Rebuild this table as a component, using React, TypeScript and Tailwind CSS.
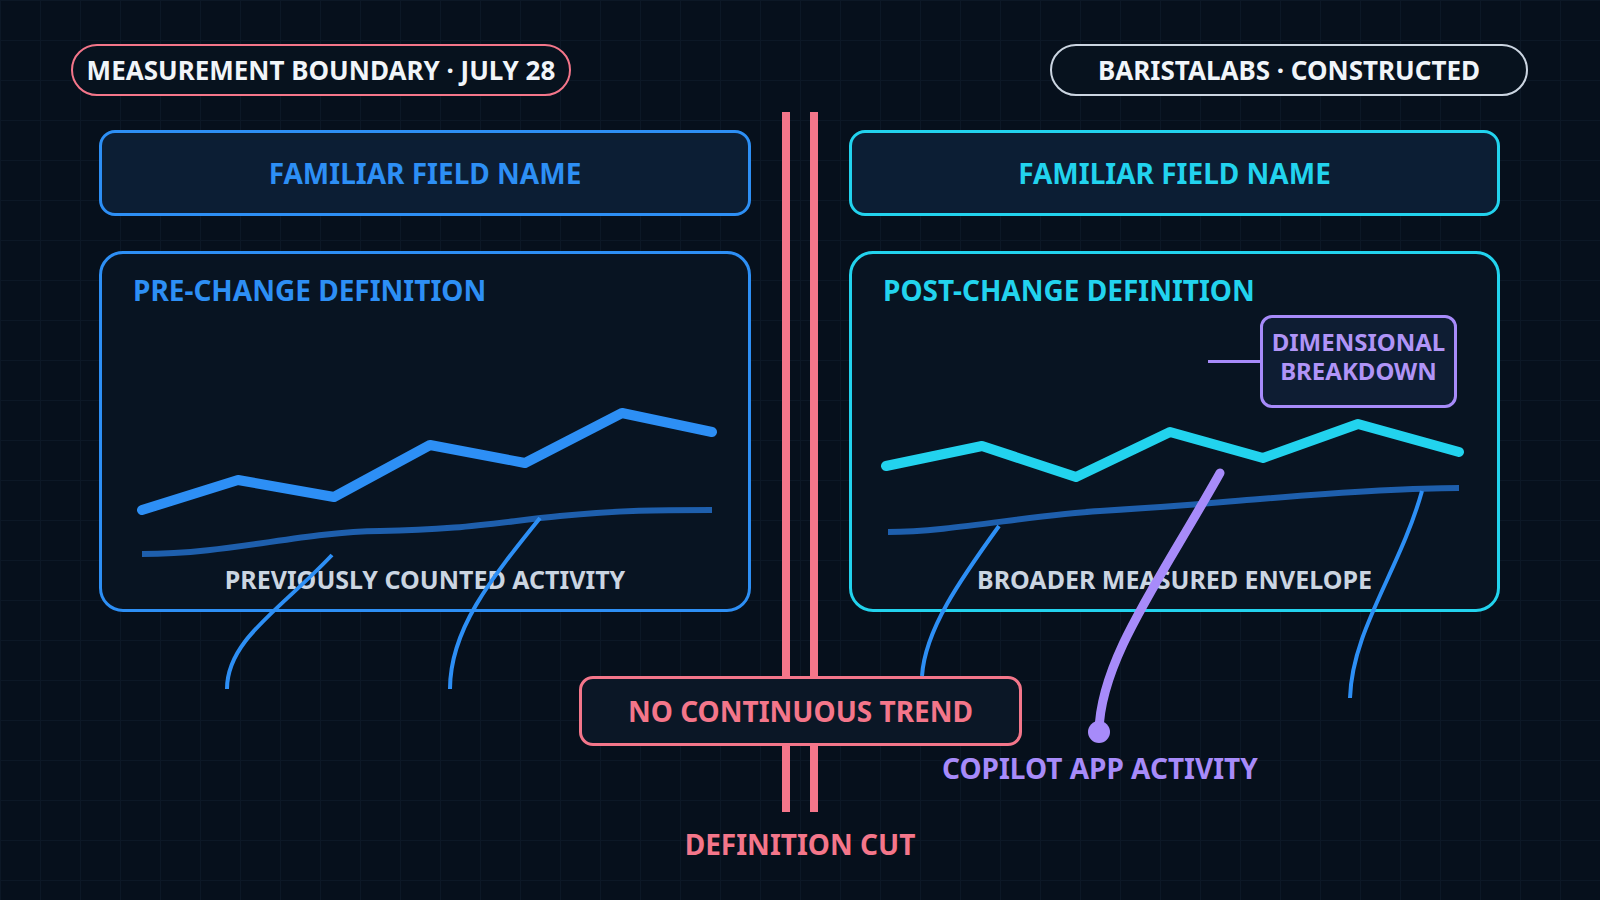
const BLUE = "#2d8ff5";
const CYAN = "#22d3ee";
const DEEP = "#1e5fad";
const VIOLET = "#a78bfa";
const ROSE = "#f4768a";

function Panel({
  side,
  title,
  label,
  children,
}: {
  side: "pre" | "post";
  title: string;
  label: string;
  children?: React.ReactNode;
}) {
  const isPre = side === "pre";
  return (
    <div className="flex flex-col gap-[35px]">
      <div
        className={
          isPre
            ? "flex h-[86px] items-center justify-center rounded-[16px] border-[3px] border-[#2d8ff5] bg-[#0c1e34]"
            : "flex h-[86px] items-center justify-center rounded-[16px] border-[3px] border-[#22d3ee] bg-[#0c1e34]"
        }
      >
        <span
          className={
            isPre
              ? "text-[28px] font-bold leading-none text-[#2d8ff5]"
              : "text-[28px] font-bold leading-none text-[#22d3ee]"
          }
        >
          FAMILIAR FIELD NAME
        </span>
      </div>

      <div
        className={
          isPre
            ? "flex h-[361px] flex-col rounded-[24px] border-[3px] border-[#2d8ff5] bg-[#081422] px-[31px] pt-[17px] pb-[15px]"
            : "flex h-[361px] flex-col rounded-[24px] border-[3px] border-[#22d3ee] bg-[#081422] px-[31px] pt-[17px] pb-[15px]"
        }
      >
        <h2
          className={
            isPre
              ? "text-[28px] font-bold leading-[38px] text-[#2d8ff5]"
              : "text-[28px] font-bold leading-[38px] text-[#22d3ee]"
          }
        >
          {title}
        </h2>
        {children}
        <p className="mt-auto text-center text-[25px] font-bold leading-[30px] text-[#cbd5e1]">
          {label}
        </p>
      </div>
    </div>
  );
}

export default function App() {
  return (
    <div className="relative h-[900px] w-[1600px] overflow-hidden bg-[#06101c] bg-[linear-gradient(to_right,#0c1826_1px,transparent_1px),linear-gradient(to_bottom,#0c1826_1px,transparent_1px)] [background-size:40px_40px] font-['Noto_Sans',sans-serif]">
      {/* definition cut rails, under everything */}
      <svg className="absolute inset-0" width="1600" height="900" viewBox="0 0 1600 900">
        <rect x="782" y="112" width="8" height="700" fill={ROSE} />
        <rect x="810" y="112" width="8" height="700" fill={ROSE} />
      </svg>

      <div className="relative">
        <div className="flex justify-between pt-[44px] pl-[71px] pr-[72px]">
          <div className="flex h-[52px] w-[500px] items-center justify-center rounded-full border-[2.5px] border-[#f4768a] bg-[#07121e]">
            <span className="text-[26px] font-bold leading-none text-[#f1f5f9]">
              MEASUREMENT BOUNDARY · JULY 28
            </span>
          </div>
          <div className="flex h-[52px] w-[478px] items-center justify-center rounded-full border-[2.5px] border-[#cbd5e1] bg-[#07121e]">
            <span className="text-[26px] font-bold leading-none text-[#f1f5f9]">
              BARISTALABS · CONSTRUCTED
            </span>
          </div>
        </div>

        <div className="mt-[34px] grid grid-cols-[652px_651px] gap-x-[98px] pl-[99px]">
          <Panel side="pre" title="PRE-CHANGE DEFINITION" label="PREVIOUSLY COUNTED ACTIVITY" />
          <Panel side="post" title="POST-CHANGE DEFINITION" label="BROADER MEASURED ENVELOPE">
            <div className="mt-[6px] mr-[9px] flex items-center justify-end">
              <div className="h-[3px] w-[52px] bg-[#a78bfa]" />
              <div className="flex h-[93px] w-[197px] items-center justify-center rounded-[12px] border-[3px] border-[#a78bfa] bg-[#0e1d33] pb-[11px]">
                <p className="text-center text-[24px] font-bold leading-[29px] text-[#b094f7]">
                  DIMENSIONAL
                  <br />
                  BREAKDOWN
                </p>
              </div>
            </div>
          </Panel>
        </div>

        <div className="flex flex-col items-center">
          <div className="mt-[64px] ml-[1px] flex h-[70px] w-[443px] items-center justify-center rounded-[14px] border-[3px] border-[#f4768a] bg-[#0b1726]">
            <span className="text-[28px] font-bold leading-none text-[#f4768a]">NO CONTINUOUS TREND</span>
          </div>
          <p className="mt-[81px] text-[28px] font-bold leading-[34px] text-[#f4768a]">DEFINITION CUT</p>
        </div>

        <p className="absolute left-[942px] top-[751px] text-[28px] font-bold leading-[34px] text-[#a78bfa]">
          COPILOT APP ACTIVITY
        </p>
      </div>

      {/* series and callout strokes drawn over the cards */}
      <svg
        className="pointer-events-none absolute inset-0"
        width="1600"
        height="900"
        viewBox="0 0 1600 900"
        fill="none"
      >
        <path
          d="M142,554 C230,554 300,532 380,531 S500,522 560,516 S660,510 712,510"
          stroke={DEEP}
          strokeWidth="6"
        />
        <path
          d="M142,510 L238,480 L334,497 L430,445 L525,463 L622,413 L712,432"
          stroke={BLUE}
          strokeWidth="10"
          strokeLinecap="round"
          strokeLinejoin="round"
        />
        <path
          d="M888,532 C950,532 1030,515 1100,511 S1200,504 1260,499 S1400,488 1459,488"
          stroke={DEEP}
          strokeWidth="6"
        />
        <path
          d="M886,466 L982,446 L1076,477 L1170,432 L1263,458 L1358,424 L1459,452"
          stroke={CYAN}
          strokeWidth="10"
          strokeLinecap="round"
          strokeLinejoin="round"
        />

        <path d="M227,689 C227,640 280,610 332,555" stroke={BLUE} strokeWidth="4" />
        <path d="M450,689 C450,630 490,580 540,518" stroke={BLUE} strokeWidth="4" />
        <path d="M922,676 C925,630 960,580 999,526" stroke={BLUE} strokeWidth="4" />
        <path d="M1350,698 C1352,630 1400,570 1422,491" stroke={BLUE} strokeWidth="4" />

        <path d="M1099,732 C1100,660 1160,580 1220,473" stroke={VIOLET} strokeWidth="9" strokeLinecap="round" />
        <circle cx="1099" cy="732" r="11" fill={VIOLET} />
      </svg>
    </div>
  );
}
